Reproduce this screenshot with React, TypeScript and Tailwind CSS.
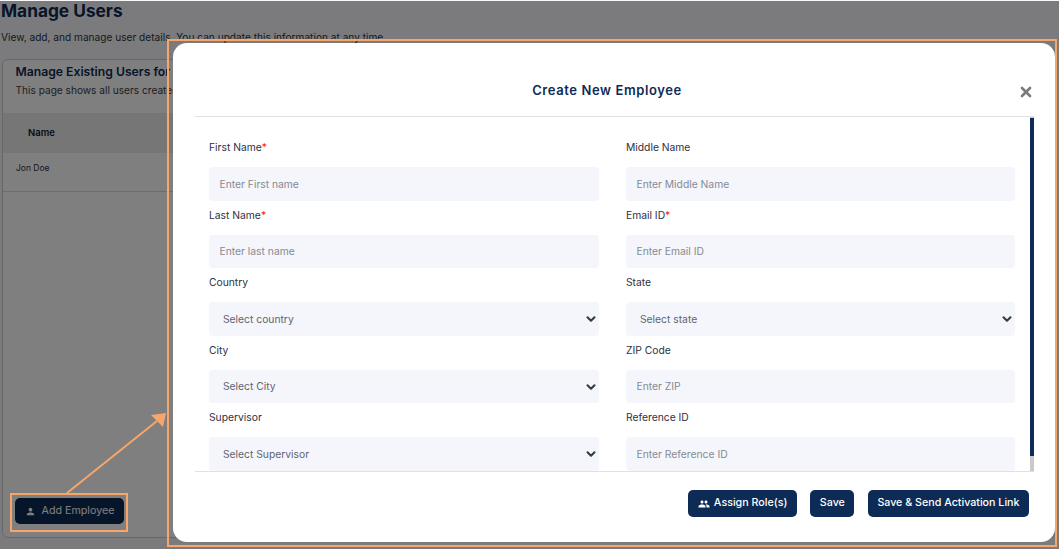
import React from "react";
import { ChevronDown, X } from "lucide-react";
import { MdPeople, MdPerson } from "react-icons/md";

const font = { fontFamily: "Inter, sans-serif" };

const fields = [
  { label: "First Name", required: true, placeholder: "Enter First name" },
  { label: "Middle Name", placeholder: "Enter Middle Name" },
  { label: "Last Name", required: true, placeholder: "Enter last name" },
  { label: "Email ID", required: true, placeholder: "Enter Email ID" },
  { label: "Country", placeholder: "Select country", select: true },
  { label: "State", placeholder: "Select state", select: true },
  { label: "City", placeholder: "Select City", select: true },
  { label: "ZIP Code", placeholder: "Enter ZIP" },
  { label: "Supervisor", placeholder: "Select Supervisor", select: true },
  { label: "Reference ID", placeholder: "Enter Reference ID" },
];

function Field({ label, required, placeholder, select }: { label: string; required?: boolean; placeholder: string; select?: boolean }) {
  return (
    <div className="h-[67.5px]">
      <div className="h-[33px] pt-[5px] text-[10.3px] leading-[16px] text-[#2f3044]">
        {label}
        {required && <span className="text-[#ff2b2b]">*</span>}
      </div>
      <div className={`flex h-[33.5px] items-center justify-between rounded-[4px] bg-[#f5f6fb] pt-[1px] text-[10.3px] ${select ? "pl-[14px] pr-[1px] text-[#5f6470]" : "px-[10.5px] text-[#858a94]"}`}>
        <span>{placeholder}</span>
        {select && <ChevronDown size={14} strokeWidth={3.5} className="text-[#333a45]" />}
      </div>
    </div>
  );
}

function NavyButton({ children }: { children: React.ReactNode }) {
  return (
    <button className="flex h-[27px] items-center gap-[4px] rounded-[5px] bg-[#0d2b54] px-[9.5px] text-[10.7px] font-medium text-white">
      {children}
    </button>
  );
}

export default function App() {
  return (
    <div className="relative h-[549px] w-[1059px] overflow-hidden bg-[#f6f7fb]" style={font}>
      {/* page behind the dialog */}
      <div className="flex h-full flex-col pt-[1px]">
        <h1 className="pl-[1px] text-[17.3px] leading-[20px] font-bold text-[#0d2b54]">Manage Users</h1>
        <p className="mt-[8px] pl-[1px] text-[10.15px] leading-[16px] text-[#30323c]">
          View, add, and manage user details. You can update this information at any time.
        </p>
        <div className="mt-[14px] mr-[3px] mb-[11px] ml-[2px] flex flex-1 flex-col rounded-[6px] border border-[#cfcfcf] bg-white">
          <div className="h-[53px] pt-[3px] pl-[12.5px]">
            <h2 className="text-[12.2px] leading-[18px] font-semibold text-[#0d2b54]">Manage Existing Users for</h2>
            <p className="mt-[1px] text-[10.15px] leading-[16px] text-[#3b3d48]">This page shows all users created</p>
          </div>
          <div className="flex h-[40px] items-center bg-[#ececec] pl-[25px] text-[9.5px] font-semibold text-[#111827]">Name</div>
          <div className="flex h-[39px] items-center border-b border-[#d8d8d8] pb-[7px] pl-[13px] text-[8.5px] text-[#30323c]">Jon Doe</div>
          <div className="mt-auto mb-[13px] ml-[12px]">
            <button className="flex h-[26px] w-[109px] items-center justify-center gap-[6px] rounded-[5px] bg-[#0d2b54] text-[10.7px] text-white">
              <MdPerson size={11} />
              Add Employee
            </button>
          </div>
        </div>
      </div>

      {/* backdrop */}
      <div className="absolute inset-0 top-[1px] bg-black/50" />

      {/* dialog */}
      <div className="absolute top-[43px] left-[173px] flex h-[499px] w-[882px] flex-col rounded-[14px] bg-white pr-[21px] pl-[22px]">
        <div className="relative flex h-[74px] shrink-0 items-start justify-center border-b border-[#dfe1e6] pt-[38px] pr-[15px]">
          <h2 className="text-[13px] leading-[18px] font-semibold tracking-[0.6px] text-[#0d2b54]">Create New Employee</h2>
          <X size={16} strokeWidth={4} className="absolute top-[41px] right-[0px] text-[#7a7d80]" />
        </div>
        <div className="flex h-[354px] shrink-0 overflow-hidden">
          <div className="flex-1 pt-[17px] pl-[14px]">
            <div className="grid w-[806px] grid-cols-[390px_389px] gap-x-[27px]">
              {fields.map((f) => (
                <Field key={f.label} {...f} />
              ))}
            </div>
          </div>
          <div className="flex w-[4px] flex-col bg-[#c9c9c9]">
            <div className="mt-[1px] h-[338px] bg-[#0d2b54]" />
          </div>
        </div>
        <div className="flex flex-1 items-start justify-end gap-[13.5px] border-t border-[#dfe1e6] pt-[18px] pr-[5px]">
          <NavyButton>
            <MdPeople size={12} />
            Assign Role(s)
          </NavyButton>
          <NavyButton>Save</NavyButton>
          <NavyButton>Save &amp; Send Activation Link</NavyButton>
        </div>
      </div>

      {/* annotation marks */}
      <div className="absolute top-[39px] left-[167px] h-[508px] w-[890px] border-2 border-[#f7a66b]" />
      <div className="absolute top-[493px] left-[10px] h-[39px] w-[118px] border-2 border-[#f7a66b]" />
      <svg className="absolute top-[405px] left-[60px]" width="110" height="95" viewBox="0 0 110 95">
        <line x1="7" y1="88" x2="97" y2="16" stroke="#f7a66b" strokeWidth="2" />
        <polygon points="106,8 91,10 103,22" fill="#f7a66b" />
      </svg>
    </div>
  );
}
